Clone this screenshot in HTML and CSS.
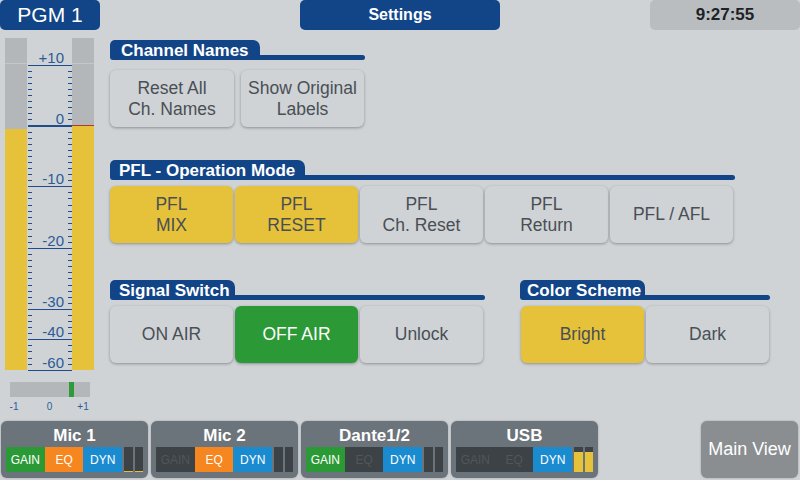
FILE: index.html
```html
<!DOCTYPE html>
<html>
<head>
<meta charset="utf-8">
<link rel="stylesheet" href="styles.css">
</head>
<body>
<div class="app">
  <header class="topbar">
    <div class="pill pgm">PGM 1</div>
    <div class="pill title">Settings</div>
    <div class="pill clock">9:27:55</div>
  </header>
  <div class="main">
    <svg class="meter" viewBox="0 30 100 391" width="100" height="391">
      <rect x="5" y="38" width="22" height="91" fill="#b4b7ba"/>
      <rect x="5" y="63" width="22" height="1" fill="#c4c7ca"/>
      <rect x="5" y="129" width="22" height="241" fill="#e6c23a"/>
      <rect x="72" y="38" width="22" height="87" fill="#b4b7ba"/>
      <rect x="72" y="63" width="22" height="1" fill="#c4c7ca"/>
      <rect x="72" y="125" width="22" height="1" fill="#b03a2e"/>
      <rect x="72" y="126" width="22" height="244" fill="#e6c23a"/>
      <path stroke="#1f4d8c" stroke-width="1" fill="none" d="M28 71.5h4M68 71.5h4M28 77.5h4M68 77.5h4M28 83.5h4M68 83.5h4M28 89.5h4M68 89.5h4M28 95.5h4M68 95.5h4M28 101.5h4M68 101.5h4M28 107.5h4M68 107.5h4M28 113.5h4M68 113.5h4M28 119.5h4M68 119.5h4M28 132.5h4M68 132.5h4M28 138.5h4M68 138.5h4M28 144.5h4M68 144.5h4M28 150.5h4M68 150.5h4M28 156.5h4M68 156.5h4M28 162.5h4M68 162.5h4M28 168.5h4M68 168.5h4M28 174.5h4M68 174.5h4M28 180.5h4M68 180.5h4M28 192.5h4M68 192.5h4M28 198.5h4M68 198.5h4M28 205.5h4M68 205.5h4M28 211.5h4M68 211.5h4M28 217.5h4M68 217.5h4M28 223.5h4M68 223.5h4M28 229.5h4M68 229.5h4M28 236.5h4M68 236.5h4M28 242.5h4M68 242.5h4M28 254.5h4M68 254.5h4M28 260.5h4M68 260.5h4M28 266.5h4M68 266.5h4M28 272.5h4M68 272.5h4M28 278.5h4M68 278.5h4M28 285.5h4M68 285.5h4M28 291.5h4M68 291.5h4M28 297.5h4M68 297.5h4M28 303.5h4M68 303.5h4M28 315.5h4M68 315.5h4M28 321.5h4M68 321.5h4M28 327.5h4M68 327.5h4M28 333.5h4M68 333.5h4M28 345.5h4M68 345.5h4M28 351.5h4M68 351.5h4M28 358.5h4M68 358.5h4M28 364.5h4M68 364.5h4"/>
      <path stroke="#1f4d8c" stroke-width="1" fill="none" d="M28 65.5h44M28 186.5h44M28 248.5h44M28 309.5h44M28 339.5h44M28 370.5h44"/>
      <rect x="28" y="125" width="44" height="2" fill="#1f4d8c"/>
      <g class="scale-label" text-anchor="end">
        <text x="64" y="63">+10</text>
        <text x="64" y="123.5">0</text>
        <text x="64" y="184">-10</text>
        <text x="64" y="246">-20</text>
        <text x="64" y="307">-30</text>
        <text x="64" y="337">-40</text>
        <text x="64" y="368">-60</text>
      </g>
      <rect x="10" y="382" width="80" height="15" fill="#b4b7ba"/>
      <rect x="69" y="382" width="5" height="15" fill="#2e9a3a"/>
      <g class="bal-label" text-anchor="middle">
        <text x="14" y="410">-1</text>
        <text x="49.5" y="410">0</text>
        <text x="83" y="410">+1</text>
      </g>
    </svg>
    <div class="content">
      <section class="sec sec-names">
        <div class="sec-head"><span class="tab tab-names">Channel Names</span><span class="rule"></span></div>
        <div class="btns btns-names">
          <div class="btn">Reset All<br>Ch. Names</div>
          <div class="btn">Show Original<br>Labels</div>
        </div>
      </section>
      <section class="sec sec-pfl">
        <div class="sec-head"><span class="tab tab-pfl">PFL - Operation Mode</span><span class="rule"></span></div>
        <div class="btns btns-pfl">
          <div class="btn yellow">PFL<br>MIX</div>
          <div class="btn yellow">PFL<br>RESET</div>
          <div class="btn">PFL<br>Ch. Reset</div>
          <div class="btn">PFL<br>Return</div>
          <div class="btn">PFL / AFL</div>
        </div>
      </section>
      <div class="row">
        <section class="sec sec-signal">
          <div class="sec-head"><span class="tab tab-signal">Signal Switch</span><span class="rule"></span></div>
          <div class="btns btns-3">
            <div class="btn">ON AIR</div>
            <div class="btn green">OFF AIR</div>
            <div class="btn">Unlock</div>
          </div>
        </section>
        <section class="sec sec-color">
          <div class="sec-head"><span class="tab tab-color">Color Scheme</span><span class="rule"></span></div>
          <div class="btns btns-2">
            <div class="btn yellow">Bright</div>
            <div class="btn">Dark</div>
          </div>
        </section>
      </div>
    </div>
  </div>
  <footer class="bottombar">
    <div class="strip">
      <div class="strip-title">Mic 1</div>
      <div class="strip-row">
        <div class="fx gain">GAIN</div><div class="fx eq">EQ</div><div class="fx dyn">DYN</div>
        <div class="lvl lvl-a"><div class="lvl-fill lvl-min"></div></div>
        <div class="lvl lvl-b"><div class="lvl-fill lvl-min"></div></div>
      </div>
    </div>
    <div class="strip">
      <div class="strip-title">Mic 2</div>
      <div class="strip-row">
        <div class="fx off">GAIN</div><div class="fx eq">EQ</div><div class="fx dyn">DYN</div>
        <div class="lvl lvl-a"></div>
        <div class="lvl lvl-b"></div>
      </div>
    </div>
    <div class="strip">
      <div class="strip-title">Dante1/2</div>
      <div class="strip-row">
        <div class="fx gain">GAIN</div><div class="fx off">EQ</div><div class="fx dyn">DYN</div>
        <div class="lvl lvl-a"></div>
        <div class="lvl lvl-b"></div>
      </div>
    </div>
    <div class="strip">
      <div class="strip-title">USB</div>
      <div class="strip-row">
        <div class="fx off">GAIN</div><div class="fx off">EQ</div><div class="fx dyn">DYN</div>
        <div class="lvl lvl-a"><div class="lvl-fill" style="height:20px"></div></div>
        <div class="lvl lvl-b"><div class="lvl-fill" style="height:20px"></div></div>
      </div>
    </div>
    <div class="mainview">Main View</div>
  </footer>
</div>
</body>
</html>
```
FILE: styles.css
```css
* { box-sizing: border-box; }
html, body { margin: 0; padding: 0; }
body {
  width: 800px;
  height: 480px;
  overflow: hidden;
  background: #cfd3d6;
  font-family: "Liberation Sans", Arial, sans-serif;
}
.app { width: 800px; height: 480px; display: flex; flex-direction: column; }

.topbar {
  display: grid;
  grid-template-columns: 100px 200px 200px 150px 150px;
  height: 30px;
  flex: none;
}
.pill {
  display: flex;
  align-items: center;
  justify-content: center;
  border-radius: 5px;
  height: 30px;
}
.pgm { grid-column: 1; background: #124587; color: #fff; font-size: 21px; }
.title { grid-column: 3; background: #124587; color: #fff; font-size: 16px; font-weight: bold; }
.clock { grid-column: 5; background: #b9bdc0; color: #1d2226; font-size: 17px; font-weight: bold; }

.main { display: flex; height: 391px; flex: none; }
.meter { width: 100px; height: 391px; flex: none; display: block; }
.scale-label { font-family: "Liberation Sans", Arial, sans-serif; font-size: 15px; fill: #2c5b98; }
.bal-label { font-family: "Liberation Sans", Arial, sans-serif; font-size: 10px; fill: #2c5b98; }

.content { flex: 1; padding: 10px 0 0 10px; }

.sec-head { display: flex; align-items: flex-end; height: 20px; }
.tab {
  height: 20px;
  background: #124587;
  color: #fff;
  font-weight: bold;
  font-size: 17px;
  line-height: 21px;
  padding-left: 11px;
  border-radius: 5px 7px 0 3px;
  white-space: nowrap;
  flex: none;
}
.tab-names { width: 150px; }
.tab-pfl { width: 195px; padding-left: 9px; }
.tab-signal { width: 125px; padding-left: 9px; }
.tab-color { width: 125px; padding-left: 7px; }
.rule { flex: 1; height: 5px; background: #124587; border-radius: 0 3px 3px 0; }

.sec-names { width: 255px; }
.sec-pfl { width: 625px; margin-top: 33px; }
.row { display: flex; gap: 35px; margin-top: 37px; }
.sec-signal { width: 375px; }
.sec-color { width: 250px; }

.btns { display: grid; gap: 2px; margin-top: 6px; grid-auto-rows: 57px; }
.btns-names { grid-template-columns: 124px 123px; gap: 7px; margin-top: 10px; }
.btns-pfl { grid-template-columns: repeat(5, 123px); }
.btns-3 { grid-template-columns: repeat(3, 123px); }
.btns-2 { grid-template-columns: repeat(2, 123px); margin-left: 1px; }

.btn {
  display: flex;
  align-items: center;
  justify-content: center;
  text-align: center;
  background: #cfd3d6;
  color: #4a4f55;
  font-size: 17.5px;
  line-height: 21px;
  border-radius: 6px;
  box-shadow: 0 1px 3px rgba(0, 0, 0, 0.32);
}
.btn.yellow { background: #e6c23a; }
.btn.green { background: #2b9a36; color: #fff; }

.bottombar {
  display: flex;
  gap: 3px;
  height: 59px;
  padding: 0 2px 0 1px;
  flex: none;
}
.strip {
  width: 147px;
  height: 57px;
  background: #6b747a;
  border-radius: 6px;
  padding: 4px 5px 0 5px;
  box-shadow: 0 0 2px rgba(0, 0, 0, 0.25);
}
.strip-title {
  color: #fff;
  font-weight: bold;
  font-size: 17px;
  line-height: 22px;
  text-align: center;
}
.strip-row { display: flex; height: 25px; }
.fx {
  width: 39px;
  height: 25px;
  display: flex;
  align-items: center;
  justify-content: center;
  color: #fff;
  font-size: 12px;
}
.fx.gain { background: #2b9a36; }
.fx.eq { background: #f6861f; }
.fx.dyn { background: #1b8bd0; }
.fx.off { background: #3c4246; color: #50575b; }
.lvl {
  height: 25px;
  background: #3c4246;
  margin-left: 2px;
  display: flex;
  flex-direction: column;
  justify-content: flex-end;
}
.lvl-a { width: 9px; }
.lvl-b { width: 8px; }
.lvl-fill { background: #e6c23a; width: 100%; }
.lvl-min { height: 1px; }

.mainview {
  margin-left: auto;
  width: 97px;
  height: 57px;
  background: #8a8e91;
  border-radius: 6px;
  color: #fff;
  font-size: 18px;
  display: flex;
  align-items: center;
  justify-content: center;
  box-shadow: 0 0 2px rgba(0, 0, 0, 0.25);
}
```
